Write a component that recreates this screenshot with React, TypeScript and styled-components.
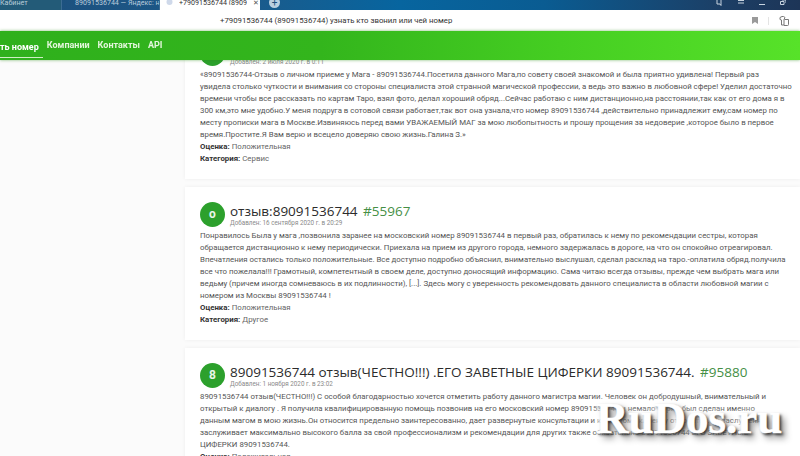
import React from "react";
import styled, { createGlobalStyle } from "styled-components";

const Global = createGlobalStyle`
  html, body { margin: 0; padding: 0; background: #fff; }
  body { font-family: Roboto, "Open Sans", sans-serif; }
`;

const Frame = styled.div`
  position: relative;
  width: 800px;
  height: 456px;
  overflow: hidden;
  display: flex;
  flex-direction: column;
  filter: blur(0.35px);
`;

const TabBar = styled.div`
  height: 10px;
  flex: none;
  display: flex;
  align-items: flex-start;
  background: linear-gradient(90deg, #1d4f7c 0%, #1c5a8a 30%, #07659f 50%, #0a5c92 68%, #1c3f66 90%, #1d3557 100%);
  font-size: 7.1px;
  line-height: 5px;
  color: #b9cbdc;
  overflow: hidden;
`;

const Tab = styled.div<{ $w: number }>`
  width: ${(p) => p.$w}px;
  height: 10px;
  flex: none;
  display: flex;
  align-items: flex-start;
  gap: 6px;
  box-sizing: border-box;
  padding-left: 7px;
  overflow: hidden;
  white-space: nowrap;
  border-right: 1px solid #3c6c93;
`;

const FirstTab = styled(Tab)`
  background: #235b78;
  padding-left: 0;
  color: #b8ccd8;
  gap: 0;
`;

const ActiveTab = styled(Tab)`
  background: #fff;
  color: #333;
  border-right: 0;
  padding-left: 6px;
  justify-content: flex-start;
  gap: 6px;
`;

const Clip = styled.span`
  width: 68px;
  overflow: hidden;
  flex: none;
`;

const Close = styled.span`
  color: #555;
`;

const Plus = styled.div`
  width: 11px;
  height: 11px;
  margin-top: -3px;
  margin-left: 9px;
  border-radius: 50%;
  background: #b9cfe0;
  color: #1d4f7c;
  font-size: 10px;
  line-height: 11px;
  text-align: center;
  flex: none;
`;

const WindowIcons = styled.div`
  margin-left: auto;
  display: flex;
  gap: 15px;
  padding-right: 14px;
`;

const AddressBar = styled.div`
  height: 21px;
  flex: none;
  display: flex;
  align-items: center;
  background: #fff;
  padding-left: 220px;
  padding-right: 11px;
  font-size: 7.8px;
  color: #333;
  white-space: nowrap;
`;

const AddressActions = styled.div`
  margin-left: auto;
  display: flex;
  align-items: center;
  gap: 10px;
`;

const Divider = styled.span`
  width: 1px;
  height: 8px;
  background: #e4e4e4;
`;

const Nav = styled.nav`
  position: relative;
  z-index: 2;
  height: 29px;
  flex: none;
  display: flex;
  align-items: center;
  gap: 8px;
  background: linear-gradient(90deg, #2fb01c 0%, #33b51c 40%, #45ce22 70%, #57e229 100%);
  box-shadow: 0 0 3px rgba(40, 140, 20, 0.6);
  font-size: 9px;
  font-weight: 700;
  white-space: nowrap;
`;

const NavItem = styled.a<{ $active?: boolean }>`
  line-height: 29px;
  box-sizing: border-box;
  color: ${(p) => (p.$active ? "#fff" : "#e3f6dc")};
  border-bottom: ${(p) => (p.$active ? "1px solid #cfeec4" : "0")};
  padding-right: ${(p) => (p.$active ? "4px" : "0")};
  margin-right: ${(p) => (p.$active ? "-4px" : "0")};
  height: ${(p) => (p.$active ? "25px" : "29px")};
`;

const Content = styled.main`
  flex: 1;
  overflow: hidden;
  background: #fbfbfb;
  padding-left: 185px;
  display: flex;
  flex-direction: column;
  gap: 8px;
`;

const Card = styled.article<{ $first?: boolean }>`
  flex: none;
  background: #fff;
  box-shadow: 0 0 4px rgba(0, 0, 0, 0.06);
  box-sizing: border-box;
  padding: 15px;
  margin-top: ${(p) => (p.$first ? "-34px" : "0")};
`;

const CardHead = styled.header`
  display: flex;
  align-items: flex-start;
  gap: 5px;
  height: 28px;
`;

const Avatar = styled.div`
  width: 25px;
  height: 25px;
  flex: none;
  border-radius: 50%;
  background: #2ca02c;
  color: #e8f5e8;
  font-size: 12px;
  font-weight: 700;
  line-height: 25px;
  text-align: center;
`;

const HeadText = styled.div`
  display: flex;
  flex-direction: column;
  white-space: nowrap;
`;

const Title = styled.h2`
  margin: 0;
  font-family: "Open Sans", sans-serif;
  font-size: 13.5px;
  line-height: 18px;
  font-weight: 500;
  color: #2b2b2b;
`;

const Num = styled.span`
  color: #458f45;
  margin-left: 2px;
`;

const DateLine = styled.div`
  font-size: 6.3px;
  line-height: 7px;
  color: #8a8a8a;
`;

const Line = styled.div`
  font-size: 7.85px;
  line-height: 12px;
  color: #555;
  white-space: nowrap;
`;

const Meta = styled.div`
  font-size: 7.85px;
  line-height: 11.5px;
  color: #666;
  white-space: nowrap;
  b { color: #333; font-weight: 700; }
`;

const Watermark = styled.div`
  position: absolute;
  left: 596px;
  top: 393px;
  z-index: 3;
  font-family: "Liberation Serif", serif;
  font-weight: 700;
  font-size: 45px;
  line-height: 50px;
  color: #fff;
  -webkit-text-stroke: 0.5px #fff;
  text-shadow: 2px 2px 3px rgba(0, 0, 0, 0.75), 5px 5px 7px rgba(0, 0, 0, 0.45), 0 0 8px #fff, 0 0 8px #fff;
  white-space: nowrap;
`;

const cards = [
  {
    first: true,
    letter: "",
    title: "",
    num: "",
    date: "Добавлен: 2 июля 2020 г. в 0:11",
    lines: [
      "«89091536744-Отзыв о личном приеме у Мага - 89091536744.Посетила данного Мага,по совету своей знакомой и была приятно удивлена! Первый раз",
      "увидела столько чуткости и внимания со стороны специалиста этой странной магической профессии, а ведь это важно в любовной сфере! Уделил достаточно",
      "времени чтобы все рассказать по картам Таро, взял фото, делал хороший обряд...Сейчас работаю с ним дистанционно,на расстоянии,так как от его дома я в",
      "300 км,это мне удобно.У меня подруга в сотовой связи работает,так вот она узнала,что номер 89091536744 ,действительно принадлежит ему,сам номер по",
      "месту прописки мага в Москве.Извиняюсь перед вами УВАЖАЕМЫЙ МАГ за мою любопытность и прошу прощения за недоверие ,которое было в первое",
      "время.Простите.Я Вам верю и всецело доверяю свою жизнь.Галина З.»",
    ],
    category: "Сервис",
  },
  {
    letter: "о",
    title: "отзыв:89091536744",
    num: "#55967",
    date: "Добавлен: 16 сентября 2020 г. в 20:29",
    lines: [
      "Понравилось Была у мага ,позвонила заранее на московский номер 89091536744 в первый раз, обратилась к нему по рекомендации сестры, которая",
      "обращается дистанционно к нему периодически. Приехала на прием из другого города, немного задержалась в дороге, на что он спокойно отреагировал.",
      "Впечатления остались только положительные. Все доступно подробно объяснил, внимательно выслушал, сделал расклад на таро.-оплатила обряд.получила",
      "все что пожелала!!! Грамотный, компетентный в своем деле, доступно доносящий информацию. Сама читаю всегда отзывы, прежде чем выбрать мага или",
      "ведьму (причем иногда сомневаюсь в их подлинности), [...]. Здесь могу с уверенность рекомендовать данного специалиста в области любовной магии с",
      "номером из Москвы 89091536744 !",
    ],
    category: "Другое",
  },
  {
    letter: "8",
    title: "89091536744 отзыв(ЧЕСТНО!!!) .ЕГО ЗАВЕТНЫЕ ЦИФЕРКИ 89091536744.",
    num: "#95880",
    date: "Добавлен: 1 ноября 2020 г. в 23:02",
    lines: [
      "89091536744 отзыв(ЧЕСТНО!!!) С особой благодарностью хочется отметить работу данного магистра магии. Человек он добродушный, внимательный и",
      "открытый к диалогу . Я получила квалифицированную помощь позвонив на его московский номер 89091536744 и немало обряд был сделан именно",
      "данным магом в мою жизнь.Он относится предельно заинтересованно, дает развернутые консультации и к каждому клиенту относится.Он заслуженно",
      "заслуживает максимально высокого балла за свой профессионализм и рекомендации для других также обязательно 89091536744 ЕГО ЗАВЕТНЫЕ",
      "ЦИФЕРКИ 89091536744.",
    ],
    category: "Другое",
  },
];

export default function App() {
  return (
    <>
      <Global />
      <Frame>
        <TabBar>
          <FirstTab $w={62}>Кабинет</FirstTab>
          <Tab $w={98}>
            <svg width="5" height="7" viewBox="0 0 5 7">
              <path d="M0 0h5v7H3.4V4.4H2L.8 7H0l1.2-2.9C.4 3.6 0 3 0 2.1Z" fill="#c8322c" />
            </svg>
            89091536744 — Яндекс: н
          </Tab>
          <ActiveTab $w={100}>
            <svg width="7" height="7" viewBox="0 0 7 7">
              <circle cx="3.5" cy="2" r="3" fill="#cfd9ea" />
            </svg>
            <Clip>+79091536744 (89091536744)</Clip>
            <Close>✕</Close>
          </ActiveTab>
          <Plus>+</Plus>
          <WindowIcons>
            <svg width="7" height="6" viewBox="0 0 7 6">
              <path d="M1 0v4h3l1 1.5V0" fill="none" stroke="#c6d3df" />
            </svg>
            <svg width="6" height="6" viewBox="0 0 6 6">
              <path d="M0 .5h6M0 3h6" stroke="#c6d3df" />
            </svg>
            <svg width="6" height="6" viewBox="0 0 6 6">
              <path d="M0 4.5h6" stroke="#c6d3df" />
            </svg>
            <svg width="6" height="6" viewBox="0 0 6 6">
              <path d="M2 0h4v3M.5 1.500h3.500v3H.5Z" fill="none" stroke="#c6d3df" />
            </svg>
          </WindowIcons>
        </TabBar>
        <AddressBar>
          +79091536744 (89091536744) узнать кто звонил или чей номер
          <AddressActions>
            <svg width="6" height="7" viewBox="0 0 6 7">
              <path d="M0 0h6v7L3 5 0 7Z" fill="#9a9a9a" />
            </svg>
            <Divider />
            <svg width="10" height="10" viewBox="0 0 10 10">
              <path d="M1 1.500 3 .5h1.500L6 1.500 5 3.500V9H2.500V4L1 3.500ZM5.500 3.500H9.500V8.500Q9.500 9.500 8.500 9.500H5" fill="none" stroke="#777" />
            </svg>
          </AddressActions>
        </AddressBar>
        <Nav>
          <NavItem $active>ть номер</NavItem>
          <NavItem>Компании</NavItem>
          <NavItem>Контакты</NavItem>
          <NavItem>API</NavItem>
        </Nav>
        <Content>
          {cards.map((c, i) => (
            <Card key={i} $first={c.first}>
              <CardHead>
                <Avatar>{c.letter}</Avatar>
                <HeadText>
                  <Title>
                    {c.title} <Num>{c.num}</Num>
                  </Title>
                  <DateLine>{c.date}</DateLine>
                </HeadText>
              </CardHead>
              {c.lines.map((l, j) => (
                <Line key={j}>{l}</Line>
              ))}
              <Meta>
                <b>Оценка:</b> Положительная
              </Meta>
              <Meta>
                <b>Категория:</b> {c.category}
              </Meta>
            </Card>
          ))}
        </Content>
        <Watermark>RuDos.ru</Watermark>
      </Frame>
    </>
  );
}
